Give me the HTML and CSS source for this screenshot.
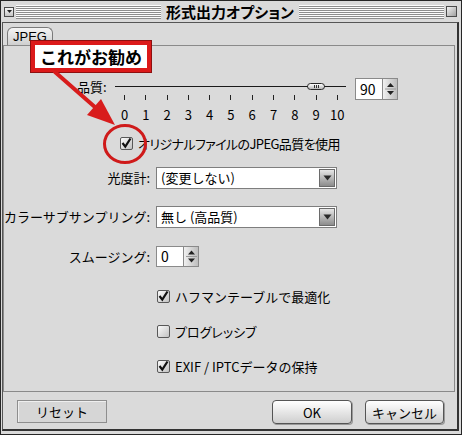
FILE: index.html
```html
<!DOCTYPE html>
<html lang="ja">
<head>
<meta charset="utf-8">
<title>形式出力オプション</title>
<link rel="stylesheet" href="styles.css">
</head>
<body>
<div class="window">
  <div class="titlebar">
    <span class="tb-box tb-left"><svg width="7" height="7" viewBox="0 0 7 7"><path d="M1 2 L6 2 L3.5 5 Z" fill="#222"/></svg></span>
    <span class="stripes"></span>
    <span class="title">形式出力オプション</span>
    <span class="stripes"></span>
    <span class="tb-box tb-right"></span>
  </div>
  <div class="content">
    <div class="tabs"><span class="tab">JPEG</span></div>
    <div class="panel">
      <div class="q-row">
        <span class="q-label">品質:</span>
        <div class="slider">
          <div class="track"><span class="thumb"></span></div>
          <div class="ticks"><span></span><span></span><span></span><span></span><span></span><span></span><span></span><span></span><span></span><span></span><span></span></div>
          <div class="nums"><span>0</span><span>1</span><span>2</span><span>3</span><span>4</span><span>5</span><span>6</span><span>7</span><span>8</span><span>9</span><span>10</span></div>
        </div>
        <div class="numfield">
          <span class="numbox wide">90</span>
          <span class="spin"><svg width="13" height="20" viewBox="0 0 13 20"><path d="M6.5 4 L10 8 L3 8 Z" fill="#222"/><path d="M3 12 L10 12 L6.5 16 Z" fill="#222"/><line x1="1" y1="10" x2="12" y2="10" stroke="#9a9a9a"/></svg></span>
        </div>
      </div>

      <div class="cb-row orig">
        <span class="cb"><svg width="13" height="13" viewBox="0 0 13 13"><path d="M2.5 6 L5.3 9.6 L10.5 1.5" fill="none" stroke="#111" stroke-width="2.2"/></svg></span>
        <span class="cb-text narrow">オリジナルファイルのJPEG品質を使用</span>
      </div>

      <div class="row row-meter">
        <span class="lbl">光度計:</span>
        <div class="select"><span class="sel-text">(変更しない)</span><span class="sel-btn"><svg width="9" height="6" viewBox="0 0 9 6"><path d="M0.5 0.5 L8.5 0.5 L4.5 5.5 Z" fill="#2a2a2a"/></svg></span></div>
      </div>
      <div class="row row-sub">
        <span class="lbl">カラーサブサンプリング:</span>
        <div class="select"><span class="sel-text">無し (高品質)</span><span class="sel-btn"><svg width="9" height="6" viewBox="0 0 9 6"><path d="M0.5 0.5 L8.5 0.5 L4.5 5.5 Z" fill="#2a2a2a"/></svg></span></div>
      </div>
      <div class="row row-smooth">
        <span class="lbl">スムージング:</span>
        <div class="numfield">
          <span class="numbox">0</span>
          <span class="spin"><svg width="13" height="19" viewBox="0 0 13 19"><path d="M6.5 3.5 L10 7.5 L3 7.5 Z" fill="#222"/><path d="M3 11.5 L10 11.5 L6.5 15.5 Z" fill="#222"/><line x1="1" y1="9.5" x2="12" y2="9.5" stroke="#9a9a9a"/></svg></span>
        </div>
      </div>

      <div class="cb-row opt opt-1">
        <span class="cb"><svg width="13" height="13" viewBox="0 0 13 13"><path d="M2.5 6 L5.3 9.6 L10.5 1.5" fill="none" stroke="#111" stroke-width="2.2"/></svg></span>
        <span class="cb-text">ハフマンテーブルで最適化</span>
      </div>
      <div class="cb-row opt opt-2">
        <span class="cb"></span>
        <span class="cb-text prop">プログレッシブ</span>
      </div>
      <div class="cb-row opt opt-3">
        <span class="cb"><svg width="13" height="13" viewBox="0 0 13 13"><path d="M2.5 6 L5.3 9.6 L10.5 1.5" fill="none" stroke="#111" stroke-width="2.2"/></svg></span>
        <span class="cb-text">EXIF / IPTCデータの保持</span>
      </div>
    </div>
    <div class="footer">
      <button class="btn flat">リセット</button>
      <span class="spacer"></span>
      <button class="btn round ok">OK</button>
      <button class="btn round">キャンセル</button>
    </div>
  </div>

  <div class="callout">これがお勧め</div>
  <svg class="annot" width="462" height="435" viewBox="0 0 462 435">
    <line x1="55" y1="72" x2="96" y2="108" stroke="#d81c1c" stroke-width="4" stroke-linecap="round"/>
    <path d="M115 125 L87 115 L101 99 Z" fill="#d81c1c"/>
    <ellipse cx="125" cy="144" rx="20.5" ry="18.5" fill="none" stroke="#cf1a1a" stroke-width="3"/>
  </svg>
</div>
</body>
</html>
```

FILE: styles.css
```css
* { box-sizing: border-box; }
html, body { margin: 0; padding: 0; }
body {
  width: 462px;
  height: 435px;
  overflow: hidden;
  background: #dadada;
  font-family: "Noto Sans CJK JP", "Noto Sans", sans-serif;
  font-size: 13px;
  color: #000;
}
.window {
  position: relative;
  width: 462px;
  height: 435px;
  border: 1px solid #262626;
  background: #dadada;
  display: flex;
  flex-direction: column;
}

/* title bar */
.titlebar {
  height: 21px;
  flex: none;
  display: flex;
  align-items: center;
  gap: 2px;
  padding: 0 4px 0 3px;
}
.tb-box {
  flex: none;
  width: 10px;
  height: 10px;
  border: 1px solid #4a4a4a;
  display: flex;
  align-items: center;
  justify-content: center;
}
.tb-left { background: linear-gradient(#f6f6f6, #c4c4c4); }
.tb-right {
  width: 11px;
  height: 11px;
  background: linear-gradient(135deg, #f2f2f2, #a0a0a0);
}
.stripes {
  flex: 1;
  height: 14px;
  background: repeating-linear-gradient(to bottom, #fdfdfd 0 1px, #8e8e8e 1px 2px);
}
.title {
  font-weight: 700;
  font-size: 15px;
  line-height: 21px;
  padding: 0 3px;
  font-feature-settings: "palt";
}

/* frame */
.content {
  flex: 1;
  margin: 0 2px 3px 1px;
  border: 1px solid #555;
  border-right: 2px solid #333;
  border-bottom: 2px solid #333;
  display: flex;
  flex-direction: column;
}
.tabs {
  height: 22px;
  flex: none;
  padding: 4px 0 0 4px;
}
.tab {
  display: block;
  width: 46px;
  height: 18px;
  border: 1px solid #7a7a7a;
  border-bottom: none;
  border-radius: 6px 6px 0 0;
  background: linear-gradient(#f4f4f4, #cfcfcf);
  font-family: "Liberation Sans", sans-serif;
  font-size: 13px;
  line-height: 18px;
  text-align: center;
}
.panel {
  height: 347px;
  flex: none;
  margin-right: 2px;
  border: 1px solid #8a8a8a;
  padding-top: 32px;
}

/* quality slider */
.q-row {
  display: flex;
  align-items: flex-start;
  padding-left: 73px;
}
.q-label {
  width: 37px;
  line-height: 18px;
}
.slider { width: 232px; }
.track {
  position: relative;
  height: 17px;
}
.track::before {
  content: "";
  position: absolute;
  left: 1px;
  right: 0;
  top: 8px;
  height: 1px;
  background: #1a1a1a;
}
.thumb {
  position: absolute;
  left: 193px;
  top: 5px;
  width: 18px;
  height: 7px;
  border: 1px solid #2a2a2a;
  border-radius: 4px;
  background: linear-gradient(#ffffff, #b8b8b8);
}
.thumb::before {
  content: "";
  position: absolute;
  left: 6px;
  top: 1px;
  width: 1px;
  height: 3px;
  background: #333;
  box-shadow: 2px 0 #333, 4px 0 #333;
}
.ticks, .nums {
  display: grid;
  grid-template-columns: repeat(11, 21.27px);
}
.ticks { height: 5px; }
.ticks span {
  justify-self: center;
  width: 1px;
  height: 5px;
  background: #222;
}
.nums {
  margin-top: 9px;
  line-height: 12px;
  font-size: 13px;
  text-align: center;
}
.numfield {
  display: flex;
  margin-left: 9px;
}
.numbox {
  width: 28px;
  height: 22px;
  border: 1px solid #8a8a8a;
  background: #fff;
  padding-left: 4px;
  line-height: 20px;
  font-size: 14px;
}
.spin {
  width: 15px;
  height: 22px;
  border: 1px solid #8a8a8a;
  border-left: none;
  background: linear-gradient(90deg, #f0f0f0, #bdbdbd);
  display: flex;
  align-items: center;
  justify-content: center;
}

/* checkbox rows */
.cb-row {
  display: flex;
  align-items: center;
  height: 14px;
  gap: 5px;
}
.cb {
  flex: none;
  width: 13px;
  height: 13px;
  border: 1px solid #585858;
  border-radius: 2px;
  background: linear-gradient(135deg, #fbfbfb, #c2c2c2);
  position: relative;
}
.cb svg {
  position: absolute;
  left: -1px;
  top: -1px;
}
.cb-text { white-space: nowrap; }
.narrow {
  font-feature-settings: "palt";
  letter-spacing: -0.6px;
}
.prop { font-feature-settings: "palt"; }
.orig {
  margin-top: 15px;
  padding-left: 116px;
}
.opt { padding-left: 153px; }
.opt-1 { margin-top: 22px; }
.opt-2, .opt-3 { margin-top: 21px; }

/* labelled rows */
.row {
  display: flex;
  align-items: center;
  gap: 6px;
  height: 21px;
}
.row .numfield { margin-left: 0; }
.row .numbox, .row .spin { height: 21px; }
.row .numbox { line-height: 19px; }
.row-meter { margin-top: 17px; }
.row-sub { margin-top: 18px; }
.row-smooth { margin-top: 19px; }
.lbl {
  width: 146px;
  flex: none;
  text-align: right;
  white-space: nowrap;
}
.select {
  width: 181px;
  height: 22px;
  border: 1px solid #7e7e7e;
  background: #fff;
  display: flex;
  align-items: center;
  padding: 1px;
}
.sel-text {
  flex: 1;
  padding-left: 3px;
  white-space: nowrap;
}
.sel-btn {
  width: 16px;
  height: 18px;
  border: 1px solid #6a6a6a;
  background: linear-gradient(#e6e6e6, #8c8c8c);
  display: flex;
  align-items: center;
  justify-content: center;
}

/* footer */
.footer {
  display: flex;
  gap: 13px;
  padding: 8px 13px 0 14px;
}
.spacer { flex: 1; }
.btn {
  margin: 0;
  font-family: "Noto Sans CJK JP", "Noto Sans", sans-serif;
  font-size: 13px;
  color: #000;
  height: 23px;
  padding: 0;
}
.flat {
  width: 90px;
  border: 1px solid #8e8e8e;
  background: #d6d6d6;
  box-shadow: inset 1px 1px #efefef;
}
.round {
  width: 79px;
  height: 24px;
  border: 1px solid #555;
  border-radius: 4px;
  background: linear-gradient(#ffffff, #e2e2e2 60%, #cfcfcf);
  box-shadow: 1px 1px 0 #9a9a9a;
}
.ok { width: 80px; }

/* annotations */
.callout {
  position: absolute;
  left: 30px;
  top: 40px;
  width: 120px;
  height: 31px;
  border: 4px solid #dc1a1a;
  outline: 1px solid #8e1010;
  background: #fff;
  font-weight: 700;
  font-size: 17px;
  line-height: 23px;
  text-align: center;
}
.annot {
  position: absolute;
  left: -1px;
  top: -1px;
  pointer-events: none;
}
```
